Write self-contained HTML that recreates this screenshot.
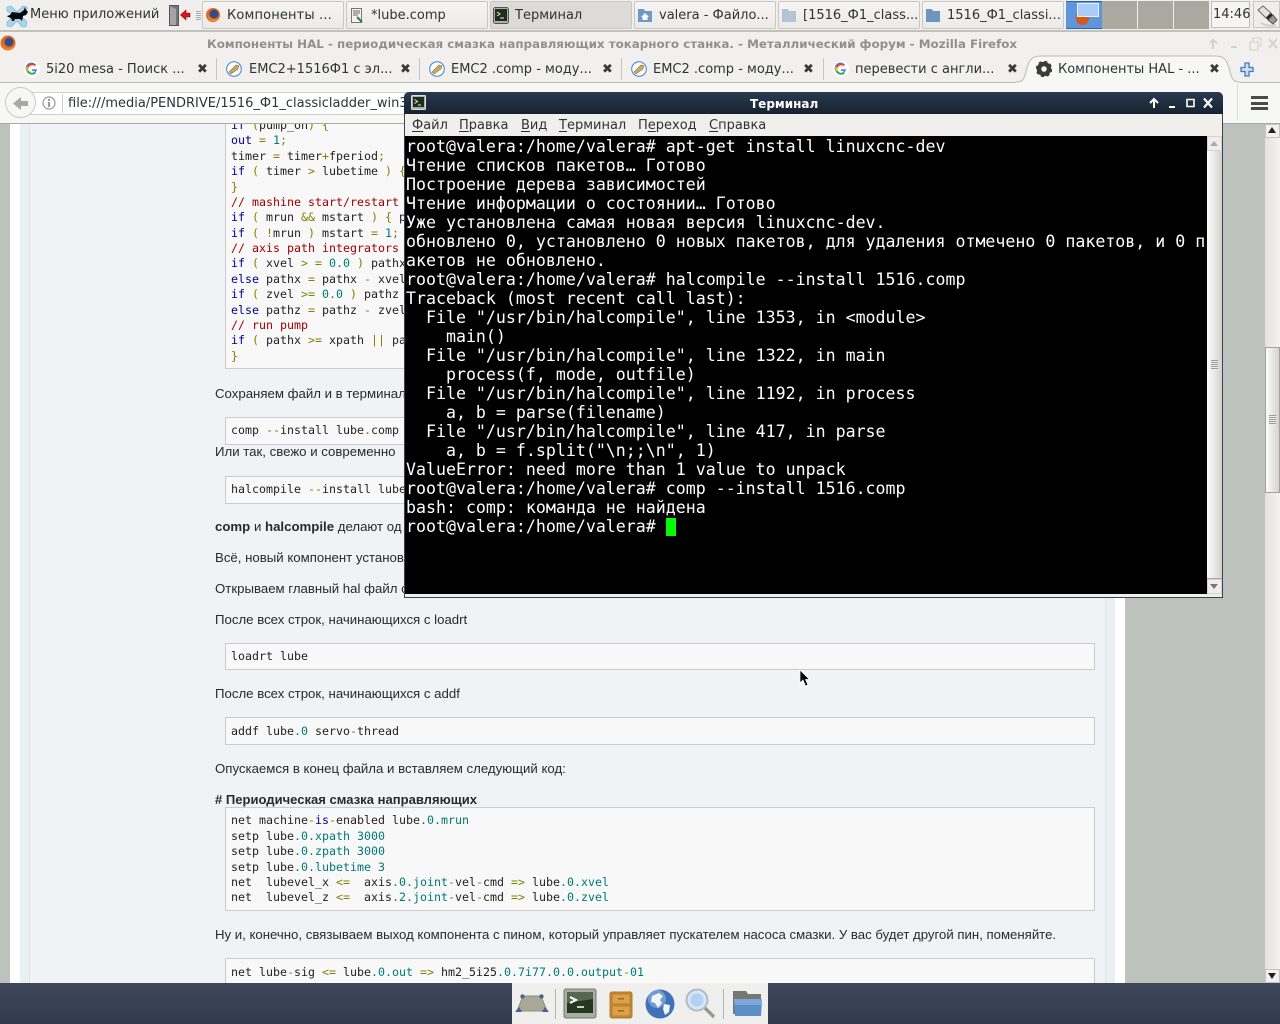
<!DOCTYPE html>
<html lang="ru"><head><meta charset="utf-8"><title>Терминал</title>
<style>
html,body{margin:0;padding:0;width:1280px;height:1024px;overflow:hidden;background:#f2f1ef}
*{box-sizing:border-box}
.a{position:absolute}
.ui{font-family:"DejaVu Sans","Liberation Sans",sans-serif;font-size:13px;color:#2e3436;white-space:nowrap;line-height:16px}
.tb{position:absolute;top:1px;height:28px;width:142px;background:linear-gradient(#f6f5f3,#ebeae7);border:1px solid #c9c8c3;border-radius:2px}
.tb span{position:absolute;left:24px;top:6px}
.ft{position:absolute;top:60px;font-family:"DejaVu Sans",sans-serif;font-size:13px;color:#2e3436;white-space:nowrap;line-height:16px}
.x{position:absolute;top:60px;font-family:"DejaVu Sans",sans-serif;font-size:13px;font-weight:bold;color:#3a3a3a;line-height:16px}
.sep{position:absolute;top:58px;width:1px;height:22px;background:#c4c4c0}
.p{position:absolute;left:215px;font-family:"Liberation Sans",sans-serif;font-size:13.23px;line-height:16px;color:#282a2e;white-space:nowrap}
.box{position:absolute;left:225px;width:870px;background:#f8f8f8;border:1px solid #ccc}
pre{position:absolute;left:231px;margin:0;font-family:"DejaVu Sans Mono",monospace;font-size:11.63px;line-height:15.4px;color:#222}
.k{color:#000090}.s{color:#808000}.n{color:#007878}.c{color:#a00000}
#term{position:absolute;left:406px;top:137px;margin:0;font-family:"DejaVu Sans Mono",monospace;font-size:16.6px;line-height:19px;color:#fff;white-space:pre;z-index:3}
.m{position:absolute;top:118px;font-family:"DejaVu Sans",sans-serif;font-size:13px;line-height:16px;color:#2e3436;white-space:nowrap}
u{text-decoration-thickness:1px;text-underline-offset:2px}
</style></head><body>

<!-- page content -->
<div class="a" style="left:0;top:124px;width:1265px;height:859px;background:#bdc3bc;overflow:hidden">
 <div class="a" style="left:10px;top:0;width:1115px;height:859px;background:#fff"></div>
 <div class="a" style="left:20px;top:0;width:1095px;height:859px;background:#e8f1ee"></div>
 <div class="a" style="left:29px;top:0;width:1077px;height:859px;background:#f0f2f5;border-left:1px solid #dfe5ea;border-right:1px solid #dfe5ea"></div>
</div>
<div class="a" style="left:0;top:124px;width:1265px;height:859px;overflow:hidden">
 <div class="box" style="top:-12px;height:257px"></div>
 <pre style="top:-6.04px;line-height:15.39px"><span class="k">if</span> <span class="s">(</span>pump_on<span class="s">)</span> <span class="s">{</span>
<span class="k">out</span> <span class="s">=</span> <span class="n">1</span><span class="s">;</span>
timer <span class="s">=</span> timer<span class="s">+</span>fperiod<span class="s">;</span>
<span class="k">if</span> <span class="s">(</span> timer <span class="s">&gt;</span> lubetime <span class="s">)</span> <span class="s">{</span>
<span class="s">}</span>
<span class="c">// mashine start/restart</span>
<span class="k">if</span> <span class="s">(</span> mrun <span class="s">&amp;&amp;</span> mstart <span class="s">)</span> <span class="s">{</span> p
<span class="k">if</span> <span class="s">(</span> <span class="s">!</span>mrun <span class="s">)</span> mstart <span class="s">=</span> <span class="n">1</span><span class="s">;</span>
<span class="c">// axis path integrators</span>
<span class="k">if</span> <span class="s">(</span> xvel <span class="s">&gt;</span> <span class="s">=</span> <span class="n">0.0</span> <span class="s">)</span> pathx
<span class="k">else</span> pathx <span class="s">=</span> pathx <span class="s">-</span> xvel
<span class="k">if</span> <span class="s">(</span> zvel <span class="s">&gt;=</span> <span class="n">0.0</span> <span class="s">)</span> pathz
<span class="k">else</span> pathz <span class="s">=</span> pathz <span class="s">-</span> zvel
<span class="c">// run pump</span>
<span class="k">if</span> <span class="s">(</span> pathx <span class="s">&gt;=</span> xpath <span class="s">||</span> pa
<span class="s">}</span></pre>
 <div class="p" style="top:262px">Сохраняем файл и в терминале</div>
 <div class="box" style="top:293px;height:28px"></div>
 <pre style="top:299px">comp <span class="s">--</span>install lube<span class="s">.</span>comp</pre>
 <div class="p" style="top:320px">Или так, свежо и современно</div>
 <div class="box" style="top:352px;height:28px"></div>
 <pre style="top:358px">halcompile <span class="s">--</span>install lube</pre>
 <div class="p" style="top:395px"><b>comp</b> и <b>halcompile</b> делают од</div>
 <div class="p" style="top:426px">Всё, новый компонент установ</div>
 <div class="p" style="top:457px">Открываем главный hal файл с</div>
 <div class="p" style="top:488px">После всех строк, начинающихся с loadrt</div>
 <div class="box" style="top:519px;height:27px"></div>
 <pre style="top:525px">loadrt lube</pre>
 <div class="p" style="top:562px">После всех строк, начинающихся с addf</div>
 <div class="box" style="top:593px;height:28px"></div>
 <pre style="top:600px">addf lube<span class="n">.0</span> servo<span class="s">-</span>thread</pre>
 <div class="p" style="top:637px">Опускаемся в конец файла и вставляем следующий код:</div>
 <div class="p" style="top:668px;font-size:13.05px"><b># Периодическая смазка направляющих</b></div>
 <div class="box" style="top:683px;height:104px"></div>
 <pre style="top:689.4px">net machine<span class="s">-</span><span class="k">is</span><span class="s">-</span>enabled lube<span class="n">.0.mrun</span>
setp lube<span class="n">.0.xpath 3000</span>
setp lube<span class="n">.0.zpath 3000</span>
setp lube<span class="n">.0.lubetime 3</span>
net  lubevel_x <span class="s">&lt;=</span>  axis<span class="n">.0.joint</span><span class="s">-</span>vel<span class="s">-</span>cmd <span class="s">=&gt;</span> lube<span class="n">.0.xvel</span>
net  lubevel_z <span class="s">&lt;=</span>  axis<span class="n">.2.joint</span><span class="s">-</span>vel<span class="s">-</span>cmd <span class="s">=&gt;</span> lube<span class="n">.0.zvel</span></pre>
 <div class="p" style="top:803px;font-size:13.2px">Ну и, конечно, связываем выход компонента с пином, который управляет пускателем насоса смазки. У вас будет другой пин, поменяйте.</div>
 <div class="box" style="top:834px;height:40px"></div>
 <pre style="top:840.5px">net lube<span class="s">-</span>sig <span class="s">&lt;=</span> lube<span class="n">.0.out</span> <span class="s">=&gt;</span> hm2_5i25<span class="n">.0.7i77.0.0.output</span><span class="s">-</span><span class="n">01</span></pre>
</div>

<!-- firefox scrollbar -->
<div class="a" style="left:1265px;top:124px;width:15px;height:859px;background:linear-gradient(90deg,#e4e3e1,#f4f3f1)"></div>
<div class="a" style="left:1265px;top:124px;width:15px;height:14px;background:#f2f1ef;border:1px solid #c4c4c0"></div>
<div class="a" style="left:1268px;top:127px;border:4.5px solid transparent;border-bottom:6px solid #222;border-top:0"></div>
<div class="a" style="left:1265px;top:347px;width:15px;height:146px;background:linear-gradient(90deg,#fdfdfc,#d3d2cf);border:1px solid #a2a19d"></div>
<div class="a" style="left:1269px;top:415px;width:7px;height:10px;background:repeating-linear-gradient(#9a9a98 0 1px,#eee 1px 2px)"></div>
<div class="a" style="left:1265px;top:969px;width:15px;height:14px;background:#f2f1ef;border:1px solid #c4c4c0"></div>
<div class="a" style="left:1268px;top:973px;border:4.5px solid transparent;border-top:6px solid #222;border-bottom:0"></div>

<!-- taskbar -->
<div class="a" style="left:0;top:0;width:1280px;height:32px;background:#f0efed;border-bottom:2px solid #c2c1bc"></div>
<svg class="a" style="left:4px;top:3px" width="26" height="26" viewBox="0 0 26 26"><path d="M3 4l4-1 6 6 6-6 4 1 0 4-6 5 6 6-1 5-4 0-5-6-6 6-4-1 0-4 6-6-6-5z" fill="#a5d3f2" stroke="#7fb0d2" stroke-width=".6"/><path d="M3 13l3-1 2-3 8 1 4-3 1-3 1 3 2 2-2 3-3 1-1 5-2-2-5 0-1 2-2 0-1-3-3-1z" fill="#050505"/></svg>
<div class="ui a" style="left:30px;top:7px">Меню приложений</div>
<svg class="a" style="left:168px;top:4px" width="24" height="23" viewBox="0 0 24 23"><path d="M1.500 1.500h9v20h-9z" fill="#77777a" stroke="#555"/><path d="M2 2l6 3v16H2z" fill="#a5a5a7"/><path d="M12.500 11l5.500-5v3h4v4h-4v3z" fill="#d7141b" stroke="#8c0e12" stroke-width=".6"/></svg>
<div class="a" style="left:196px;top:11px;width:5px;height:10px;background:repeating-linear-gradient(#aaa 0 1px,#f0efed 1px 2px)"></div>
<div class="tb ui" style="left:202px"><span style="letter-spacing:.15px">Компоненты ...</span></div>
<div class="tb ui" style="left:346px"><span>*lube.comp</span></div>
<div class="tb ui" style="left:490px;background:#dcdbd8"><span>Терминал</span></div>
<div class="tb ui" style="left:634px"><span>valera - Файло...</span></div>
<div class="tb ui" style="left:778px"><span>[1516_Ф1_class...</span></div>
<div class="tb ui" style="left:922px"><span>1516_Ф1_classi...</span></div>
<svg class="a" style="left:205px;top:7px" width="16" height="16" viewBox="0 0 16 16"><circle cx="8" cy="8" r="7" fill="#e8661a"/><circle cx="9" cy="7" r="4.500" fill="#2c4f8f"/><path d="M2 6c1 6 7 9 12 5-3 5-11 4-12-5z" fill="#f7a51d"/></svg>
<svg class="a" style="left:350px;top:7px" width="15" height="17" viewBox="0 0 15 17"><path d="M1.500 1.500h10v14h-10z" fill="#f2f2ee" stroke="#777"/><path d="M3 4h7M3 6h7M3 8h5" stroke="#666"/><path d="M7 10l5 5" stroke="#3a7a3a" stroke-width="2"/></svg>
<svg class="a" style="left:493px;top:7px" width="16" height="17" viewBox="0 0 16 17"><rect x=".5" y=".5" width="15" height="16" rx="2" fill="#b0b0ac" stroke="#555"/><rect x="2" y="2" width="12" height="12" fill="#1d2f1b"/><path d="M4 5l3 2-3 2M7 11h4" stroke="#e8e8e8" fill="none"/></svg>
<svg class="a" style="left:637px;top:8px" width="16" height="15" viewBox="0 0 16 15"><path d="M1 1h6l1 2h7v11H1z" fill="#6f9ac8"/><path d="M8 5l-4 4h1.500v3h5V9H12z" fill="#fff"/></svg>
<svg class="a" style="left:781px;top:8px" width="16" height="15" viewBox="0 0 16 15"><path d="M1 1h6l1 2h7v11H1z" fill="#b5c3d6"/></svg>
<svg class="a" style="left:925px;top:8px" width="16" height="15" viewBox="0 0 16 15"><path d="M1 1h6l1 2h7v11H1z" fill="#6e94c4"/></svg>
<!-- pager -->
<div class="a" style="left:1066px;top:1px;width:36px;height:28px;background:#5f95dc;border-top:1px solid #2e63b0;border-bottom:1px solid #2e63b0"></div>
<div class="a" style="left:1076px;top:14px;width:13px;height:11px;border-radius:0 0 7px 7px;background:#d8581a"></div>
<div class="a" style="left:1077px;top:3px;width:22px;height:14px;background:#a9cdf8;border:1px solid #e8f1fc"></div>
<div class="a" style="left:1102px;top:1px;width:35px;height:28px;background:#aaa99f"></div>
<div class="a" style="left:1138px;top:1px;width:35px;height:28px;background:#aaa99f"></div>
<div class="a" style="left:1174px;top:1px;width:35px;height:28px;background:#aaa99f"></div>
<div class="a" style="left:1211px;top:1px;width:39px;height:27px;background:#f6f5f3;border:1px solid #c0bfba"></div>
<div class="ui a" style="left:1213px;top:7px;font-size:13px">14:46</div>
<div class="a" style="left:1253px;top:1px;width:27px;height:27px;background:#efeeec;border:1px solid #c9c8c3"></div>
<svg class="a" style="left:1255px;top:3px" width="25" height="25" viewBox="0 0 25 25"><path d="M3 7l5-4 8 7-5 5z" fill="#e4e4e4" stroke="#666"/><path d="M11 15l5-5 2 2-5 5z" fill="#222"/><path d="M13 17l5-5 4 5-4 4z" fill="#999" stroke="#555"/><path d="M6 20q7 4 15 2" stroke="#cfcfcc" stroke-width="2" fill="none"/></svg>

<!-- firefox chrome -->
<div class="a" style="left:0;top:32px;width:1280px;height:50px;background:#f1f0ee"></div>
<svg class="a" style="left:0;top:35px" width="16" height="16" viewBox="0 0 16 16"><circle cx="8" cy="8" r="7.500" fill="#e8661a"/><circle cx="9" cy="7" r="4.500" fill="#2c4f8f"/><path d="M1 6c1 7 8 10 13 5-3 6-12 4-13-5z" fill="#f7a51d"/></svg>
<div class="a" style="left:207px;top:36px;font:bold 11.89px/16px 'DejaVu Sans',sans-serif;color:#90908d;white-space:nowrap">Компоненты HAL - периодическая смазка направляющих токарного станка. - Металлический форум - Mozilla Firefox</div>
<svg class="a" style="left:1210px;top:37px" width="70" height="14" viewBox="0 0 70 14" fill="none" stroke="#d2d2cf" stroke-width="2"><path d="M3 12V3M0 6l3-3 4 3"/><path d="M21 10h6"/><path d="M40 5h8v8h-8zM43 5V1h8v8h-3" stroke-width="1"/><path d="M59 2l8 9M67 2l-8 9"/></svg>

<div class="a" style="left:0;top:82px;width:1280px;height:1px;background:#bcbbb7"></div>
<div class="a" style="left:0;top:83px;width:1280px;height:40px;background:#f7f7f6"></div>
<div class="a" style="left:0;top:123px;width:1280px;height:1px;background:#aaa"></div>
<!-- active tab -->
<svg class="a" style="left:1016px;top:53px" width="226" height="31" viewBox="0 0 226 31"><path d="M0 29c6 0 8-2 10-10 2-9 4-16 14-16h176c10 0 12 7 14 16 2 8 4 10 10 10v2H0z" fill="#f7f7f6"/><path d="M0 29c6 0 8-2 10-10 2-9 4-16 14-16h176c10 0 12 7 14 16 2 8 4 10 10 10" fill="none" stroke="#bcbbb7"/></svg>

<svg class="a" style="left:24px;top:61px" width="16" height="16" viewBox="0 0 16 16"><circle cx="8" cy="8" r="8" fill="#fff"/><path d="M12.800 8.200h-4.700v1.800h2.700c-.4 1.200-1.400 1.900-2.800 1.900A3.900 3.900 0 1 1 10.700 5l1.300-1.300A5.800 5.800 0 1 0 13 8.900z" fill="#4285f4"/><path d="M3 5.400L4.700 6.700A3.900 3.900 0 0 1 10.700 5L12 3.700A5.800 5.800 0 0 0 3 5.400z" fill="#ea4335"/><path d="M3 10.700l1.600-1.200A3.900 3.900 0 0 0 10.600 11l1.400 1.200A5.800 5.800 0 0 1 3 10.700z" fill="#34a853"/><path d="M2.200 8c0-1 .3-1.800.8-2.600l1.700 1.300a3.900 3.900 0 0 0 0 2.700L3 10.700A5.800 5.800 0 0 1 2.200 8z" fill="#fbbc05"/></svg>
<div class="ft" style="left:46px;top:62px">5i20 mesa - Поиск ...</div><div class="x" style="left:197px;top:62px">✖</div><div class="sep" style="left:216px"></div>
<svg class="a" style="left:226px;top:61px" width="16" height="16" viewBox="0 0 16 16"><circle cx="8" cy="8" r="7.300" fill="#fff" stroke="#3a80d0"/><path d="M3 11l7-7 3 1-1 3-7 5z" fill="#c8a868" stroke="#8d7340" stroke-width=".6"/></svg>
<div class="ft" style="left:249px;top:62px">ЕМС2+1516Ф1 с эл...</div><div class="x" style="left:400px;top:62px">✖</div><div class="sep" style="left:419px"></div>
<svg class="a" style="left:429px;top:61px" width="16" height="16" viewBox="0 0 16 16"><circle cx="8" cy="8" r="7.300" fill="#fff" stroke="#3a80d0"/><path d="M3 11l7-7 3 1-1 3-7 5z" fill="#c8a868" stroke="#8d7340" stroke-width=".6"/></svg>
<div class="ft" style="left:451px;top:62px">EMC2 .comp - моду...</div><div class="x" style="left:602px;top:62px">✖</div><div class="sep" style="left:621px"></div>
<svg class="a" style="left:631px;top:61px" width="16" height="16" viewBox="0 0 16 16"><circle cx="8" cy="8" r="7.300" fill="#fff" stroke="#3a80d0"/><path d="M3 11l7-7 3 1-1 3-7 5z" fill="#c8a868" stroke="#8d7340" stroke-width=".6"/></svg>
<div class="ft" style="left:653px;top:62px">EMC2 .comp - моду...</div><div class="x" style="left:803px;top:62px">✖</div><div class="sep" style="left:823px"></div>
<svg class="a" style="left:833px;top:61px" width="16" height="16" viewBox="0 0 16 16"><circle cx="8" cy="8" r="8" fill="#fff"/><path d="M12.800 8.200h-4.700v1.800h2.700c-.4 1.200-1.400 1.900-2.800 1.900A3.900 3.900 0 1 1 10.700 5l1.300-1.300A5.800 5.800 0 1 0 13 8.900z" fill="#4285f4"/><path d="M3 5.400L4.700 6.700A3.900 3.900 0 0 1 10.700 5L12 3.700A5.800 5.800 0 0 0 3 5.400z" fill="#ea4335"/><path d="M3 10.700l1.600-1.200A3.900 3.900 0 0 0 10.600 11l1.400 1.200A5.800 5.800 0 0 1 3 10.700z" fill="#34a853"/><path d="M2.200 8c0-1 .3-1.800.8-2.600l1.700 1.300a3.900 3.900 0 0 0 0 2.700L3 10.700A5.800 5.800 0 0 1 2.200 8z" fill="#fbbc05"/></svg>
<div class="ft" style="left:855px;top:62px">перевести с англи...</div><div class="x" style="left:1007px;top:62px">✖</div>
<svg class="a" style="left:1036px;top:61px" width="16" height="16" viewBox="0 0 16 16"><circle cx="8" cy="8" r="5" fill="none" stroke="#3c3c3c" stroke-width="4.500"/><circle cx="8" cy="8" r="7" fill="none" stroke="#3c3c3c" stroke-width="2.500" stroke-dasharray="2.800 2.700"/></svg>
<div class="ft" style="left:1058px;top:62px">Компоненты HAL - ...</div><div class="x" style="left:1209px;top:62px">✖</div>
<svg class="a" style="left:1240px;top:62px" width="14" height="15" viewBox="0 0 14 15"><path d="M5 1h4v4.500h4v4H9V14H5V9.500H1v-4h4z" fill="#cfe0f4" stroke="#4478bb" stroke-width="1.300"/></svg>

<!-- url bar -->
<div class="a" style="left:28px;top:92px;width:420px;height:23px;background:#fff;border:1px solid #cfcfcc;border-left:0"></div>
<div class="a" style="left:5px;top:87px;width:31px;height:31px;border-radius:50%;background:#f7f7f6;border:1px solid #c9c9c6"></div>
<svg class="a" style="left:12px;top:95px" width="18" height="17" viewBox="0 0 18 17"><path d="M1 8.500L9 2v4h7v5H9v4z" fill="#a8a8a6"/></svg>
<svg class="a" style="left:42px;top:96px" width="14" height="14" viewBox="0 0 14 14"><circle cx="7" cy="7" r="6" fill="none" stroke="#999" stroke-width="1.200"/><path d="M7 3v2M7 6v5" stroke="#777" stroke-width="1.500"/></svg>
<div class="a" style="left:62px;top:94px;width:1px;height:19px;background:#d0d0cd"></div>
<div class="ft" style="left:68px;top:96px;font-size:13px">file:///media/PENDRIVE/1516_Ф1_classicladder_win3</div>
<div class="a" style="left:1237px;top:84px;width:1px;height:36px;background:#d8d8d5"></div>
<div class="a" style="left:1251px;top:96px;width:17px;height:14px;border-top:3px solid #4a4a4a;border-bottom:3px solid #4a4a4a"></div>
<div class="a" style="left:1251px;top:101.500px;width:17px;height:3px;background:#4a4a4a"></div>

<!-- terminal window -->
<div class="a" style="left:404px;top:92px;width:819px;height:506px;background:#f0efec;border:1px solid #3c4454;border-top:0;border-radius:5px 5px 0 0;z-index:2"></div>
<div class="a" style="left:404px;top:92px;width:819px;height:22px;background:linear-gradient(#2a3a50,#17222f);border-radius:5px 5px 0 0;z-index:2"></div>
<svg class="a" style="left:411px;top:95px;z-index:3" width="15" height="15" viewBox="0 0 15 15"><rect x=".5" y=".5" width="14" height="14" rx="1" fill="#a9b0a5" stroke="#ddd"/><rect x="2" y="2" width="11" height="10" fill="#1d2f1b"/><path d="M3.500 4.500l3 2-3 2M7 10h3" stroke="#e8e8e8" fill="none"/></svg>
<div class="a" style="left:750px;top:97px;z-index:3;font:bold 12px/15px 'DejaVu Sans',sans-serif;color:#fff">Терминал</div>
<svg class="a" style="left:1148px;top:97px;z-index:3" width="68" height="12" viewBox="0 0 68 12" fill="none" stroke="#fff" stroke-width="2"><path d="M6 11V3M2 6l4-4 4 4"/><path d="M21 10h6"/><path d="M39 2.500h7v7h-7z" stroke-width="1.600"/><path d="M56 1.500l8 9M64 1.500l-8 9" stroke-width="2.200"/></svg>
<div class="m" style="left:412px;z-index:3"><u>Ф</u>айл</div>
<div class="m" style="left:459px;z-index:3"><u>П</u>равка</div>
<div class="m" style="left:521px;z-index:3"><u>В</u>ид</div>
<div class="m" style="left:559px;z-index:3"><u>Т</u>ерминал</div>
<div class="m" style="left:638px;z-index:3">П<u>е</u>реход</div>
<div class="m" style="left:709px;z-index:3"><u>С</u>правка</div>
<div class="a" style="left:405px;top:136px;width:802px;height:458px;background:#000;z-index:2"></div>
<div class="a" style="left:1207px;top:136px;width:15px;height:458px;background:linear-gradient(90deg,#fdfdfc,#d3d2cf);z-index:2"></div>
<div class="a" style="left:1207px;top:136px;width:15px;height:15px;background:#efeeec;border:1px solid #d5d4d0;z-index:3"></div>
<div class="a" style="left:1210px;top:141px;border:4.500px solid transparent;border-bottom:5px solid #aaa;border-top:0;z-index:4"></div>
<div class="a" style="left:1211px;top:360px;width:7px;height:10px;background:repeating-linear-gradient(#9a9a98 0 1px,#eee 1px 2px);z-index:3"></div>
<div class="a" style="left:1207px;top:578px;width:15px;height:1px;background:#a9a8a4;z-index:3"></div>
<div class="a" style="left:1207px;top:579px;width:15px;height:15px;background:#efeeec;border:1px solid #d5d4d0;z-index:3"></div>
<div class="a" style="left:1210px;top:584px;border:4.500px solid transparent;border-top:5px solid #777;border-bottom:0;z-index:4"></div>
<pre id="term">root@valera:/home/valera# apt-get install linuxcnc-dev
Чтение списков пакетов… Готово
Построение дерева зависимостей
Чтение информации о состоянии… Готово
Уже установлена самая новая версия linuxcnc-dev.
обновлено 0, установлено 0 новых пакетов, для удаления отмечено 0 пакетов, и 0 п
акетов не обновлено.
root@valera:/home/valera# halcompile --install 1516.comp
Traceback (most recent call last):
  File "/usr/bin/halcompile", line 1353, in &lt;module&gt;
    main()
  File "/usr/bin/halcompile", line 1322, in main
    process(f, mode, outfile)
  File "/usr/bin/halcompile", line 1192, in process
    a, b = parse(filename)
  File "/usr/bin/halcompile", line 417, in parse
    a, b = f.split("\n;;\n", 1)
ValueError: need more than 1 value to unpack
root@valera:/home/valera# comp --install 1516.comp
bash: comp: команда не найдена
root@valera:/home/valera# </pre>
<div class="a" style="left:666px;top:518px;width:10px;height:18px;background:#00ff00;z-index:4"></div>

<!-- mouse -->
<svg class="a" style="left:799px;top:669px;z-index:6" width="12" height="18" viewBox="0 0 12 18"><path d="M1 1v13l3-3 2.500 6 2.500-1-2.500-5.500H10.500z" fill="#000" stroke="#fff" stroke-width=".7"/></svg>

<!-- dock -->
<div class="a" style="left:0;top:983px;width:1280px;height:41px;background:linear-gradient(#3f475b,#323a4e);z-index:5"></div>
<div class="a" style="left:512px;top:983px;width:256px;height:41px;background:#efefee;z-index:5"></div>
<div class="a" style="left:555px;top:989px;width:1px;height:30px;background:#b5b5b3;z-index:6"></div>
<div class="a" style="left:723px;top:989px;width:1px;height:30px;background:#b5b5b3;z-index:6"></div>
<svg class="a" style="left:515px;top:993px;z-index:6" width="34" height="20" viewBox="0 0 34 20"><path d="M8 3h18l6 15H2z" fill="#a9a99a" stroke="#8b8c80"/><circle cx="7.500" cy="3.500" r="2.200" fill="#4a6391"/><circle cx="26.500" cy="3.500" r="2.200" fill="#4a6391"/><path d="M0 19l4-5 3 5zM34 19l-4-5-3 5z" fill="#4a6391"/></svg>
<svg class="a" style="left:563px;top:988px;z-index:6" width="34" height="31" viewBox="0 0 34 31"><rect x="1" y="1" width="32" height="29" rx="2" fill="#a9aba5" stroke="#777"/><rect x="4" y="4" width="26" height="21" fill="#243820"/><path d="M4 4h26v7L4 15z" fill="#55684f"/><path d="M7 9l6 3-6 3" stroke="#fff" stroke-width="2" fill="none"/><path d="M14 19h7" stroke="#fff" stroke-width="1.500"/><circle cx="23" cy="28" r="1" fill="#7fcf4f"/></svg>
<svg class="a" style="left:609px;top:991px;z-index:6" width="24" height="28" viewBox="0 0 24 28"><rect x="1" y="1" width="22" height="26" rx="2" fill="#c8872c" stroke="#a87a3a"/><rect x="3" y="3" width="18" height="10" fill="#dd9f47" stroke="#b58130"/><rect x="3" y="15" width="18" height="10" fill="#dd9f47" stroke="#b58130"/><path d="M9 7h6v1.500H9zM9 19h6v1.500H9z" fill="#9a6a24"/></svg>
<svg class="a" style="left:645px;top:989px;z-index:6" width="30" height="30" viewBox="0 0 30 30"><circle cx="15" cy="15" r="14.500" fill="#3f72ba"/><circle cx="12" cy="10" r="9" fill="#86aee0" opacity=".7"/><path d="M7 7l7-3 4 3-3 4 2 3-4 5-3-5-4-1zM19 15l6 1-1 7-4 3-2-6z" fill="#f4f4f4"/></svg>
<svg class="a" style="left:685px;top:988px;z-index:6" width="32" height="32" viewBox="0 0 32 32"><circle cx="12" cy="12" r="10.500" fill="#d5e6f7" stroke="#b4bac0" stroke-width="2"/><circle cx="12" cy="12" r="6.500" fill="#9cc3ec" opacity=".6"/><path d="M20 20l9 9" stroke="#9a9a95" stroke-width="3.500"/></svg>
<svg class="a" style="left:732px;top:990px;z-index:6" width="31" height="28" viewBox="0 0 31 28"><path d="M1 1h13l2 3h13v20H1z" fill="#777873"/><path d="M2 9h28l-1 17H3z" fill="#5c8ec8"/><path d="M2 9h28l-.4 6H2.500z" fill="#7ba7dc"/></svg>
</body></html>
